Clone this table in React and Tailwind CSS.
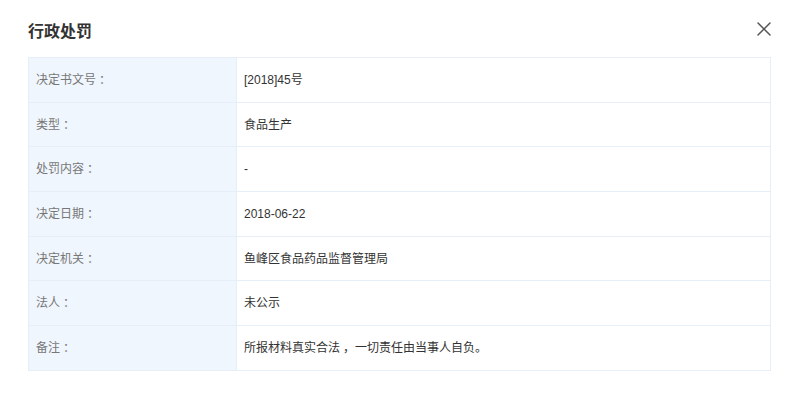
import { X } from 'lucide-react'

// 全角标点左侧留白，看上去居中，与参考图一致
const P = ({ children }) => <span className="ml-[3px]">{children}</span>

const rows = [
  ['决定书文号', '[2018]45号'],
  ['类型', '食品生产'],
  ['处罚内容', '-'],
  ['决定日期', '2018-06-22'],
  ['决定机关', '鱼峰区食品药品监督管理局'],
  ['法人', '未公示'],
  ['备注', <>所报材料真实合法<P>，</P>一切责任由当事人自负。</>],
]

export default function App() {
  return (
    <div className="w-[800px] h-[399px] bg-white px-[28px] pt-[20px] font-['Liberation_Sans','Noto_Sans_CJK_SC',sans-serif]">
      {/* 标题栏 */}
      <div className="flex items-center justify-between h-[24px] mb-[13px]">
        <h2 className="text-[16px] font-bold text-[#333]">行政处罚</h2>
        <X className="w-[24px] h-[24px] text-[#555] -mr-[4px] -mt-[7px]" strokeWidth={1.5} />
      </div>

      <div className="w-[743px] border border-[#e6eef8] border-b-0">
        {rows.map(([label, value]) => (
          <div key={label} className="flex h-[44.7px] border-b border-[#e6eef8] text-[12px]">
            <div className="w-[208px] bg-[#f0f6fd] border-r border-[#e6eef8] flex items-center pl-[7px] text-[#777]">
              {label}<P>：</P>
            </div>
            <div className="flex-1 flex items-center pl-[7px] text-[#333]">
              {value}
            </div>
          </div>
        ))}
      </div>
    </div>
  )
}
